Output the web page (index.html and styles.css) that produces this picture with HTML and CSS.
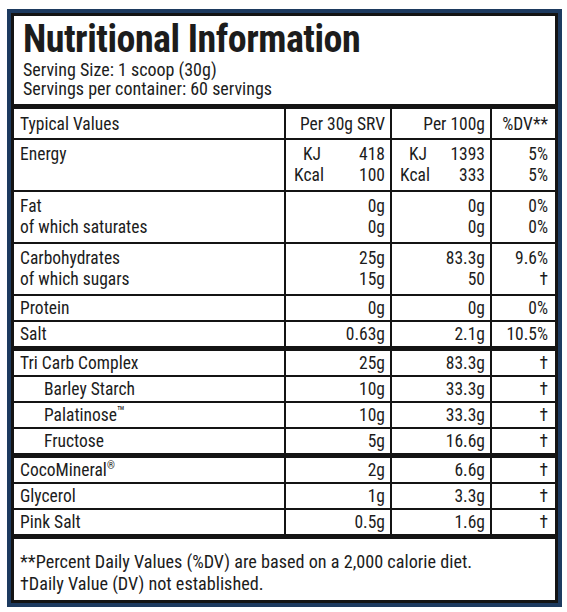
FILE: index.html
```html
<!DOCTYPE html>
<html lang="en">

<head>
  <meta charset="UTF-8">
  <meta name="viewport" content="width=device-width, initial-scale=1.0">
  <title>Nutritional Information</title>
  <link rel="stylesheet" href="styles.css">
</head>

<body>
  <div class="label">
    <div class="label-inner">
      <div class="label-head">
        <h1>Nutritional Information</h1>
        <p>Serving Size: 1 scoop (30g)</p>
        <p>Servings per container: 60 servings</p>
      </div>

      <table class="facts">
        <colgroup>
          <col class="c-name">
          <col class="c-srv">
          <col class="c-100">
          <col class="c-dv">
        </colgroup>
        <tr class="top">
          <td>Typical Values</td>
          <td class="num">Per 30g SRV</td>
          <td class="num">Per 100g</td>
          <td class="num">%DV**</td>
        </tr>
        <tr class="multi">
          <td>Energy</td>
          <td>
            <div class="energy"><span class="kj">KJ</span><span>418</span><span>Kcal</span><span>100</span></div>
          </td>
          <td>
            <div class="energy"><span class="kj">KJ</span><span>1393</span><span>Kcal</span><span>333</span></div>
          </td>
          <td class="num">5%<br>5%</td>
        </tr>
        <tr class="multi">
          <td>Fat<br>of which saturates</td>
          <td class="num">0g<br>0g</td>
          <td class="num">0g<br>0g</td>
          <td class="num">0%<br>0%</td>
        </tr>
        <tr class="multi">
          <td>Carbohydrates<br>of which sugars</td>
          <td class="num">25g<br>15g</td>
          <td class="num">83.3g<br>50</td>
          <td class="num">9.6%<br>&dagger;</td>
        </tr>
        <tr>
          <td>Protein</td>
          <td class="num">0g</td>
          <td class="num">0g</td>
          <td class="num">0%</td>
        </tr>
        <tr>
          <td>Salt</td>
          <td class="num">0.63g</td>
          <td class="num">2.1g</td>
          <td class="num">10.5%</td>
        </tr>
        <tr class="sep">
          <td>Tri Carb Complex</td>
          <td class="num">25g</td>
          <td class="num">83.3g</td>
          <td class="num">&dagger;</td>
        </tr>
        <tr>
          <td class="sub">Barley Starch</td>
          <td class="num">10g</td>
          <td class="num">33.3g</td>
          <td class="num">&dagger;</td>
        </tr>
        <tr>
          <td class="sub">Palatinose<sup class="tm">&trade;</sup></td>
          <td class="num">10g</td>
          <td class="num">33.3g</td>
          <td class="num">&dagger;</td>
        </tr>
        <tr>
          <td class="sub">Fructose</td>
          <td class="num">5g</td>
          <td class="num">16.6g</td>
          <td class="num">&dagger;</td>
        </tr>
        <tr class="sep">
          <td>CocoMineral<sup>&reg;</sup></td>
          <td class="num">2g</td>
          <td class="num">6.6g</td>
          <td class="num">&dagger;</td>
        </tr>
        <tr>
          <td>Glycerol</td>
          <td class="num">1g</td>
          <td class="num">3.3g</td>
          <td class="num">&dagger;</td>
        </tr>
        <tr>
          <td>Pink Salt</td>
          <td class="num">0.5g</td>
          <td class="num">1.6g</td>
          <td class="num">&dagger;</td>
        </tr>
      </table>

      <div class="label-foot">
        <p>**Percent Daily Values (%DV) are based on a 2,000 calorie diet.</p>
        <p>&dagger;Daily Value (DV) not established.</p>
      </div>
    </div>
  </div>
</body>

</html>
```

FILE: styles.css
```css
* {
  margin: 0;
  padding: 0;
  box-sizing: border-box;
}

body {
  font-family: 'Roboto Condensed', 'Liberation Sans Narrow', 'DejaVu Sans Condensed', 'Roboto', sans-serif;
  font-stretch: condensed;
  background: #ffffff;
  color: #1c1c1c;
  padding: 9px 5px 0 7px;
}

.label {
  width: 555px;
  height: 598px;
  border: 4px solid #1d3a5f;
  background: #111111;
}

.label-inner {
  height: 100%;
  border: 3px solid #141414;
  background: #ffffff;
  display: flex;
  flex-direction: column;
}

.label-head {
  padding: 3px 9px 6px;
  border-bottom: 5px solid #141414;
}

.label-head h1 {
  font-size: 38px;
  font-weight: 700;
  line-height: 41px;
  letter-spacing: -0.5px;
}

.label-head p {
  font-size: 18px;
  line-height: 19px;
}

.facts {
  width: 100%;
  border-collapse: collapse;
  border-style: hidden;
  table-layout: fixed;
  font-size: 17.5px;
}

.c-name {
  width: 271px;
}

.c-srv {
  width: 106px;
}

.c-100 {
  width: 100px;
}

.c-dv {
  width: 64px;
}

.facts td {
  border: 2px solid #141414;
  padding: 2px 5px 1px 6px;
  line-height: 21px;
  vertical-align: top;
}

.facts tr.top td {
  padding-top: 5px;
  padding-bottom: 3px;
}

.facts tr.multi td {
  padding-top: 4px;
  padding-bottom: 4px;
}

.facts tr.sep td {
  border-top-width: 5px;
}

.facts td.num {
  text-align: right;
}

.facts td:first-child {
  padding-left: 6px;
}

.facts td:last-child {
  padding-right: 7px;
}

.facts td.sub {
  padding-left: 30px;
}

.facts sup {
  font-size: 10px;
  line-height: 0;
}

.facts sup.tm {
  font-size: 15px;
  vertical-align: 4px;
}

.energy {
  display: grid;
  grid-template-columns: 34px 1fr;
  line-height: 21px;
}

.energy span:nth-child(odd) {
  text-align: center;
}

.energy span.kj {
  padding-left: 6px;
}

.energy span:nth-child(even) {
  text-align: right;
}

.label-foot {
  flex: 1;
  border-top: 5px solid #141414;
  padding: 12px 6px 8px;
  font-size: 18.2px;
  line-height: 22px;
}
```
